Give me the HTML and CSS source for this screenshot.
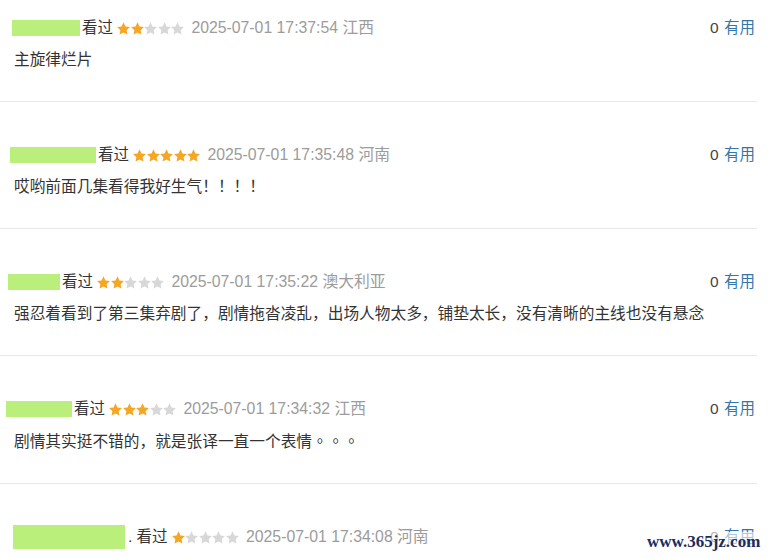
FILE: index.html
```html
<!DOCTYPE html>
<html>
    <head>
        <meta charset="utf-8">
        <title>短评</title>
        <link rel="stylesheet" href="styles.css">
    </head>
    <body>
        <svg width="0" height="0" class="defs">
            <symbol id="star" viewBox="1.6 1.2 20.8 20.4">
                <path d="M12 1.5l3.1 6.6 7.1.9-5.2 5 1.3 7.1L12 17.6l-6.3 3.5L7 14l-5.2-5 7.1-.9z"/>
            </symbol>
        </svg>

        <div class="comments">
            <div class="comment">
                <div class="head">
                    <div class="info">
                        <span class="name n1"></span>
                        <span class="seen">看过</span>
                        <span class="stars">
                            <svg class="on"><use href="#star"/></svg><svg class="on"><use href="#star"/></svg><svg><use href="#star"/></svg><svg><use href="#star"/></svg><svg><use href="#star"/></svg>
                        </span>
                        <span class="time">2025-07-01 17:37:54 江西</span>
                    </div>
                    <div class="votes">0 <a href="#">有用</a></div>
                </div>
                <p class="text">主旋律烂片</p>
            </div>

            <div class="comment">
                <div class="head">
                    <div class="info">
                        <span class="name n2"></span>
                        <span class="seen">看过</span>
                        <span class="stars">
                            <svg class="on"><use href="#star"/></svg><svg class="on"><use href="#star"/></svg><svg class="on"><use href="#star"/></svg><svg class="on"><use href="#star"/></svg><svg class="on"><use href="#star"/></svg>
                        </span>
                        <span class="time">2025-07-01 17:35:48 河南</span>
                    </div>
                    <div class="votes">0 <a href="#">有用</a></div>
                </div>
                <p class="text">哎哟前面几集看得我好生气！！！！</p>
            </div>

            <div class="comment">
                <div class="head">
                    <div class="info">
                        <span class="name n3"></span>
                        <span class="seen">看过</span>
                        <span class="stars">
                            <svg class="on"><use href="#star"/></svg><svg class="on"><use href="#star"/></svg><svg><use href="#star"/></svg><svg><use href="#star"/></svg><svg><use href="#star"/></svg>
                        </span>
                        <span class="time">2025-07-01 17:35:22 澳大利亚</span>
                    </div>
                    <div class="votes">0 <a href="#">有用</a></div>
                </div>
                <p class="text">强忍着看到了第三集弃剧了，剧情拖沓凌乱，出场人物太多，铺垫太长，没有清晰的主线也没有悬念</p>
            </div>

            <div class="comment">
                <div class="head">
                    <div class="info">
                        <span class="name n4"></span>
                        <span class="seen">看过</span>
                        <span class="stars">
                            <svg class="on"><use href="#star"/></svg><svg class="on"><use href="#star"/></svg><svg class="on"><use href="#star"/></svg><svg><use href="#star"/></svg><svg><use href="#star"/></svg>
                        </span>
                        <span class="time">2025-07-01 17:34:32 江西</span>
                    </div>
                    <div class="votes">0 <a href="#">有用</a></div>
                </div>
                <p class="text">剧情其实挺不错的，就是张译一直一个表情<span class="dots">。。。</span></p>
            </div>

            <div class="comment">
                <div class="head">
                    <div class="info">
                        <span class="name n5"></span>
                        <span class="seen">. 看过</span>
                        <span class="stars">
                            <svg class="on"><use href="#star"/></svg><svg><use href="#star"/></svg><svg><use href="#star"/></svg><svg><use href="#star"/></svg><svg><use href="#star"/></svg>
                        </span>
                        <span class="time">2025-07-01 17:34:08 河南</span>
                    </div>
                    <div class="votes">0 <a href="#">有用</a></div>
                </div>
            </div>
        </div>

        <div class="watermark">www.365jz.com</div>
    </body>
</html>
```

FILE: styles.css
```css
body {
    margin: 0;
    height: 100vh;
    overflow: hidden;
    background: #fff;
    font-family: "Liberation Sans", "Noto Sans CJK SC", sans-serif;
    color: #333;
}

.defs {
    position: absolute;
}

.comments {
    width: 757px;
}

.comment {
    padding: 43px 2px 31px 14px;
    border-bottom: 1px solid #e8e8e8;
}

.comment:first-child {
    padding-top: 18px;
}

.head {
    display: flex;
    justify-content: space-between;
    align-items: center;
    height: 20px;
}

.info {
    display: flex;
    align-items: center;
    font-size: 15.5px;
    line-height: 20px;
}

/* blurred user names */
.name {
    display: inline-block;
    height: 16px;
    margin-right: 2px;
    background: #b9ef7a;
}
.n1 { width: 68px; margin-left: -2px; }
.n2 { width: 86px; margin-left: -4px; }
.n3 { width: 52px; margin-left: -6px; }
.n4 { width: 66px; margin-left: -8px; }
.n5 { width: 112px; height: 24px; margin-left: -1px; margin-right: 3px; }

.seen {
    color: #333;
}

.stars {
    display: flex;
    gap: 0.6px;
    margin: 0 7px 0 4px;
}

.stars svg {
    width: 13px;
    height: 13px;
    fill: #d8d8d8;
}

.stars svg.on {
    fill: #f5a623;
}

.time {
    color: #9c9c9c;
    font-size: 15.8px;
}

.votes {
    font-size: 15.5px;
    color: #444;
    line-height: 20px;
}

.votes a {
    color: #3377aa;
    text-decoration: none;
    margin-left: 1px;
}

.text {
    margin: 12px 0 0;
    font-size: 15.7px;
    line-height: 20px;
    color: #333;
}

.dots {
    font-family: "Noto Sans CJK TC", sans-serif;
}

.watermark {
    position: absolute;
    left: 647px;
    top: 532px;
    font-family: "Liberation Serif", serif;
    font-weight: bold;
    font-size: 17px;
    color: #1d2c5c;
    background: rgba(255, 255, 255, 0.6);
}
```
